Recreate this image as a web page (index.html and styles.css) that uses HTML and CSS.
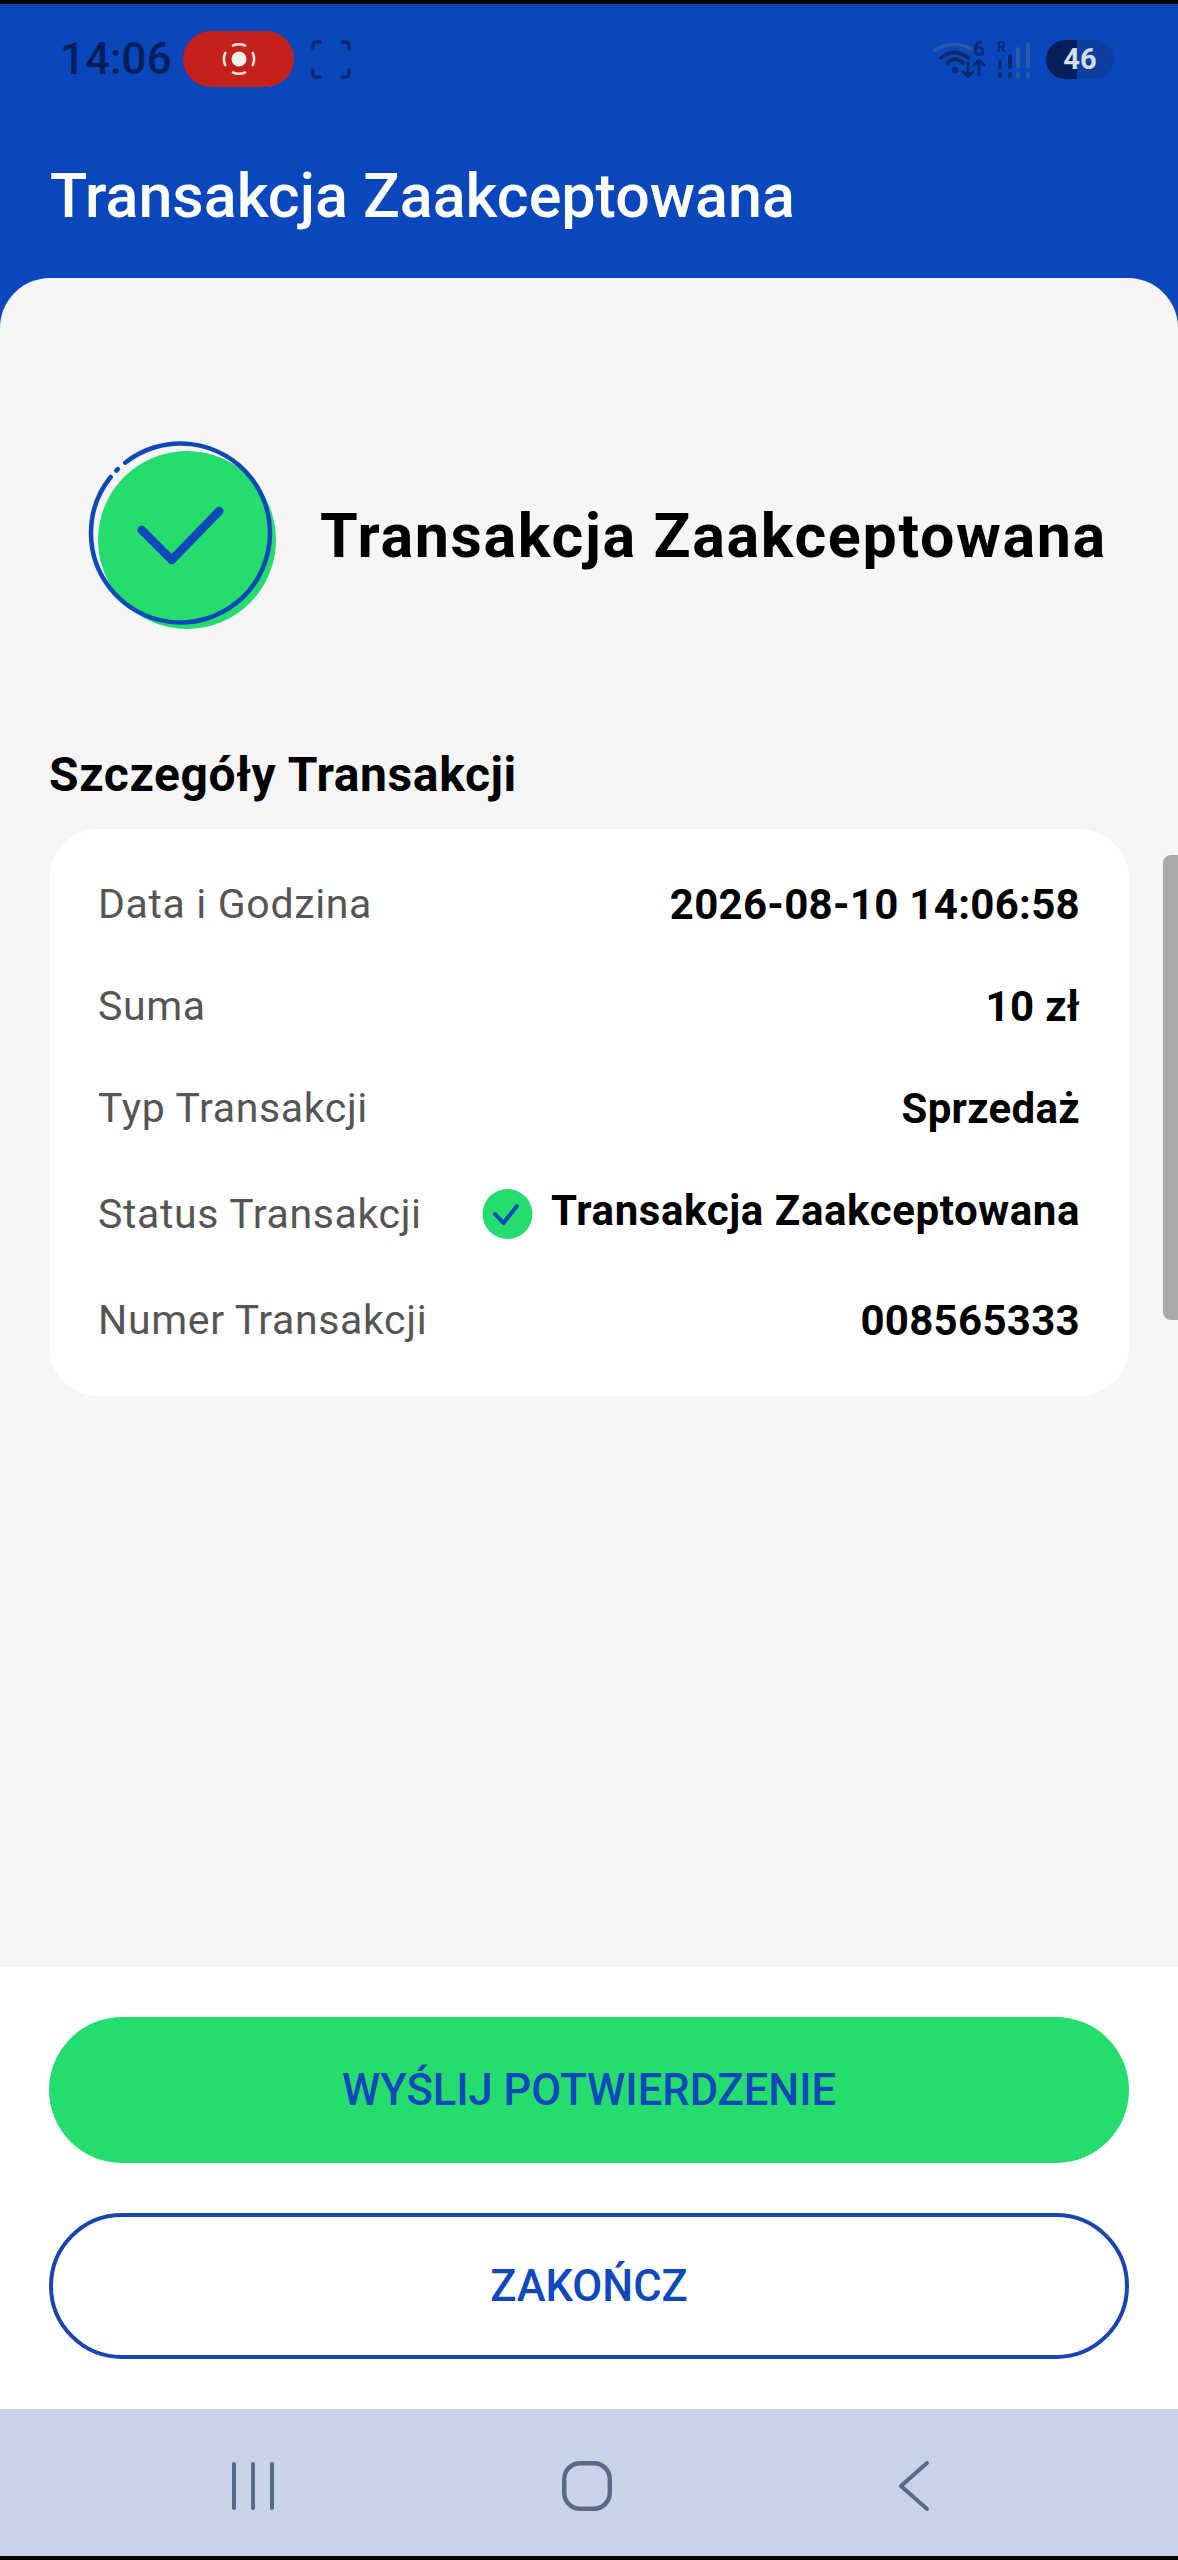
FILE: index.html
```html
<!DOCTYPE html>
<html lang="pl">
<head>
    <meta charset="UTF-8">
    <meta name="viewport" content="width=device-width, initial-scale=1.0">
    <title>Transakcja Zaakceptowana</title>
    <link rel="stylesheet" href="styles.css">
</head>
<body>

    <div class="app">
        <!-- pasek statusu -->
        <div class="status-bar">
            <div class="status-left">
                <span class="clock">14:06</span>
                <span class="rec-pill">
                    <svg width="36" height="36" viewBox="0 0 36 36" fill="none" stroke="#f6e6e4" stroke-width="2.6" stroke-linecap="round">
                        <circle cx="18" cy="18" r="7.5" fill="#f6efee" stroke="none"/>
                        <path d="M12 4.5 A15 15 0 0 1 24 4.5"/>
                        <path d="M4.2 12 A15 15 0 0 0 4.2 24"/>
                        <path d="M12 31.5 A15 15 0 0 0 24 31.5"/>
                        <path d="M31.8 12 A15 15 0 0 1 31.8 24"/>
                    </svg>
                </span>
                <svg class="capture-icon" width="40" height="39" viewBox="0 0 40 39" fill="none" stroke="#0a2a6c" stroke-width="3.4" stroke-linecap="round" stroke-linejoin="round">
                    <path d="M2 9 V5 Q2 2 5 2 H9"/>
                    <path d="M31 2 H35 Q38 2 38 5 V9"/>
                    <path d="M38 30 V34 Q38 37 35 37 H31"/>
                    <path d="M9 37 H5 Q2 37 2 34 V30"/>
                </svg>
            </div>
            <div class="status-right">
                <span class="wifi-wrap">
                    <svg width="58" height="38" viewBox="0 0 58 38" fill="none" stroke-linecap="round">
                        <path d="M2 10 Q20 -1 38 9" stroke="#2a5aa8" stroke-width="3.6"/>
                        <path d="M8 18 Q21.5 7 35 18" stroke="#0a2a6c" stroke-width="3.8"/>
                        <path d="M14.5 23 Q22 15 30 23" stroke="#0a2a6c" stroke-width="3.8"/>
                        <circle cx="22" cy="30" r="3.2" fill="#0a2a6c"/>
                        <path d="M35 23 V37 M30 32 L35 37 L40 32" stroke="#0a2a6c" stroke-width="3"/>
                        <path d="M46 35 V20 M41 25 L46 20 L51 25" stroke="#0a2a6c" stroke-width="3"/>
                    </svg>
                    <span class="wifi-six">6</span>
                </span>
                <span class="signal">
                    <span class="signal-r">R</span>
                    <svg width="34" height="38" viewBox="0 0 34 38" fill="none" stroke-linecap="round" stroke-width="4">
                        <path d="M3 22 V27 M3 34 V36" stroke="#0a2a6c"/>
                        <path d="M13 16 V27 M13 34 V36" stroke="#0a2a6c"/>
                        <path d="M21 9 V27 M21 34 V36" stroke="#2a5aa8"/>
                        <path d="M31 4 V27 M31 34 V36" stroke="#2a5aa8"/>
                    </svg>
                </span>
                <span class="battery"><span class="battery-level"></span><span class="battery-num">46</span></span>
            </div>
        </div>

        <div class="top-bar">Transakcja Zaakceptowana</div>

        <main class="sheet">
            <div class="result">
                <svg class="result-icon" width="192" height="192" viewBox="0 0 192 192" fill="none" stroke-linecap="round" stroke-linejoin="round">
                    <circle cx="99" cy="100" r="89" fill="#25dd6d"/>
                    <!-- obwodka z przerwa i kropka u gory po lewej -->
                    <circle cx="92.5" cy="93" r="89.5" stroke="#0f48bb" stroke-width="4.5" stroke-dasharray="541 8.5 2 11" transform="rotate(231.8 92.5 93)"/>
                    <path d="M53.7 90 L83.7 120 L131.3 71" stroke="#0f48bb" stroke-width="8.5"/>
                </svg>
                <h1 class="result-title">Transakcja Zaakceptowana</h1>
            </div>

            <h2 class="section-title">Szczegóły Transakcji</h2>

            <div class="details">
                <div class="row">
                    <span class="row-label">Data i Godzina</span>
                    <span class="row-value">2026-08-10 14:06:58</span>
                </div>
                <div class="row">
                    <span class="row-label">Suma</span>
                    <span class="row-value">10 zł</span>
                </div>
                <div class="row">
                    <span class="row-label">Typ Transakcji</span>
                    <span class="row-value">Sprzedaż</span>
                </div>
                <div class="row row-status">
                    <span class="row-label">Status Transakcji</span>
                    <span class="status-value">
                        <svg width="51" height="50" viewBox="0 0 51 50" fill="none">
                            <circle cx="25.5" cy="25" r="25" fill="#25dd6d"/>
                            <path d="M13 25 L21.5 34 L35 17" stroke="#0f48bb" stroke-width="4" stroke-linecap="round" stroke-linejoin="round"/>
                        </svg>
                        <span class="row-value status-text">Transakcja Zaakceptowana</span>
                    </span>
                </div>
                <div class="row">
                    <span class="row-label">Numer Transakcji</span>
                    <span class="row-value">008565333</span>
                </div>
            </div>

            <div class="scroll-thumb"></div>
        </main>

        <div class="actions">
            <a class="btn btn-primary">WYŚLIJ POTWIERDZENIE</a>
            <a class="btn btn-outline">ZAKOŃCZ</a>
        </div>

        <!-- przyciski systemowe -->
        <nav class="nav-bar">
            <svg width="44" height="48" viewBox="0 0 44 48" fill="none" stroke="#5a6a84" stroke-width="4" stroke-linecap="round">
                <path d="M3 2 V46 M22 2 V46 M41 2 V46"/>
            </svg>
            <svg width="50" height="50" viewBox="0 0 50 50" fill="none" stroke="#5a6a84" stroke-width="4.4">
                <rect x="2.2" y="2.2" width="45.6" height="45.6" rx="16"/>
            </svg>
            <svg width="32" height="50" viewBox="0 0 32 50" fill="none" stroke="#5a6a84" stroke-width="4" stroke-linecap="round" stroke-linejoin="round">
                <path d="M29 2 L3 25 L29 48"/>
            </svg>
        </nav>
    </div>

</body>
</html>
```

FILE: styles.css
```css
* {
    box-sizing: border-box;
}

html,
body {
    margin: 0;
    height: 100%;
}

body {
    font-family: Roboto, "Liberation Sans", sans-serif;
    background-color: #000;
}

.app {
    display: flex;
    flex-direction: column;
    height: 2552px;
    margin: 4px 0;
    background-color: #0a47bd;
    overflow: hidden;
}

/* pasek statusu */
.status-bar {
    display: flex;
    justify-content: space-between;
    align-items: center;
    height: 110px;
    padding: 0 64px 0 60px;
}

.status-left,
.status-right {
    display: flex;
    align-items: center;
}

.clock {
    width: 123px;
    font-size: 44px;
    font-weight: 500;
    color: #071f58;
}

.rec-pill {
    display: flex;
    justify-content: center;
    align-items: center;
    width: 111px;
    height: 56px;
    border-radius: 28px;
    background-color: #c4211c;
}

.capture-icon {
    margin-left: 17px;
}

.wifi-wrap {
    position: relative;
    display: block;
    height: 38px;
}

.wifi-six {
    position: absolute;
    top: -3px;
    right: 6px;
    font-size: 21px;
    font-weight: 700;
    color: #0a2a6c;
}

.signal {
    position: relative;
    display: block;
    height: 38px;
    margin-left: 6px;
}

.signal-r {
    position: absolute;
    top: -1px;
    left: 0;
    font-size: 14px;
    font-weight: 700;
    color: #0a2a6c;
}

.battery {
    position: relative;
    display: flex;
    justify-content: center;
    align-items: center;
    width: 68px;
    height: 39px;
    margin-left: 15px;
    border-radius: 20px;
    background-color: #0f3f9e;
    overflow: hidden;
}

.battery-level {
    position: absolute;
    top: 0;
    bottom: 0;
    left: 0;
    width: 46%;
    background-color: #071f58;
}

.battery-num {
    position: relative;
    font-size: 29px;
    font-weight: 700;
    color: #d5deef;
}

.top-bar {
    height: 164px;
    padding: 47px 50px 0;
    font-size: 61px;
    font-weight: 500;
    line-height: 70px;
    color: #fff;
}

/* zawartosc */
.sheet {
    position: relative;
    flex: 1;
    padding: 162px 49px 0;
    border-radius: 50px 50px 0 0;
    background-color: #f5f5f6;
}

.result {
    display: flex;
    align-items: center;
    gap: 40px;
    padding-left: 39px;
}

.result-icon {
    flex-shrink: 0;
    overflow: visible;
}

.result-title {
    margin: 0;
    font-size: 61px;
    font-weight: 700;
    letter-spacing: 1.65px;
    color: #000;
    white-space: nowrap;
}

.section-title {
    margin: 115px 0 0;
    font-size: 48px;
    font-weight: 700;
    letter-spacing: 0.6px;
    line-height: 56px;
    color: #000;
}

.details {
    height: 567px;
    margin-top: 26px;
    padding: 24px 49px 0;
    border-radius: 50px;
    background-color: #fff;
}

.row {
    display: flex;
    justify-content: space-between;
    align-items: center;
    height: 102px;
    font-size: 42px;
}

.row-status {
    height: 110px;
}

.row-label {
    font-size: 41px;
    letter-spacing: 0.65px;
    color: #555;
}

.row-value {
    font-weight: 700;
    letter-spacing: 0.3px;
    color: #000;
}

.status-value {
    display: flex;
    align-items: flex-start;
    gap: 18px;
}

.status-text {
    line-height: 43px;
    letter-spacing: 0.6px;
}

.scroll-thumb {
    position: absolute;
    top: 577px;
    right: 0;
    width: 15px;
    height: 465px;
    border-radius: 8px 0 0 8px;
    background-color: #a9a9a9;
}

/* przyciski */
.actions {
    display: flex;
    flex-direction: column;
    gap: 50px;
    padding: 50px 49px;
    background-color: #fff;
}

.btn {
    display: flex;
    justify-content: center;
    align-items: center;
    height: 146px;
    border-radius: 74px;
    font-size: 43.5px;
    font-weight: 500;
    color: #0f48bb;
}

.btn-primary {
    background-color: #25dd6d;
}

.btn-outline {
    border: 4px solid #1845b0;
    background-color: #fff;
}

.nav-bar {
    display: flex;
    justify-content: space-between;
    align-items: center;
    height: 147px;
    padding: 6px 248px 0 231px;
    background-color: #c8d3ea;
}
```
